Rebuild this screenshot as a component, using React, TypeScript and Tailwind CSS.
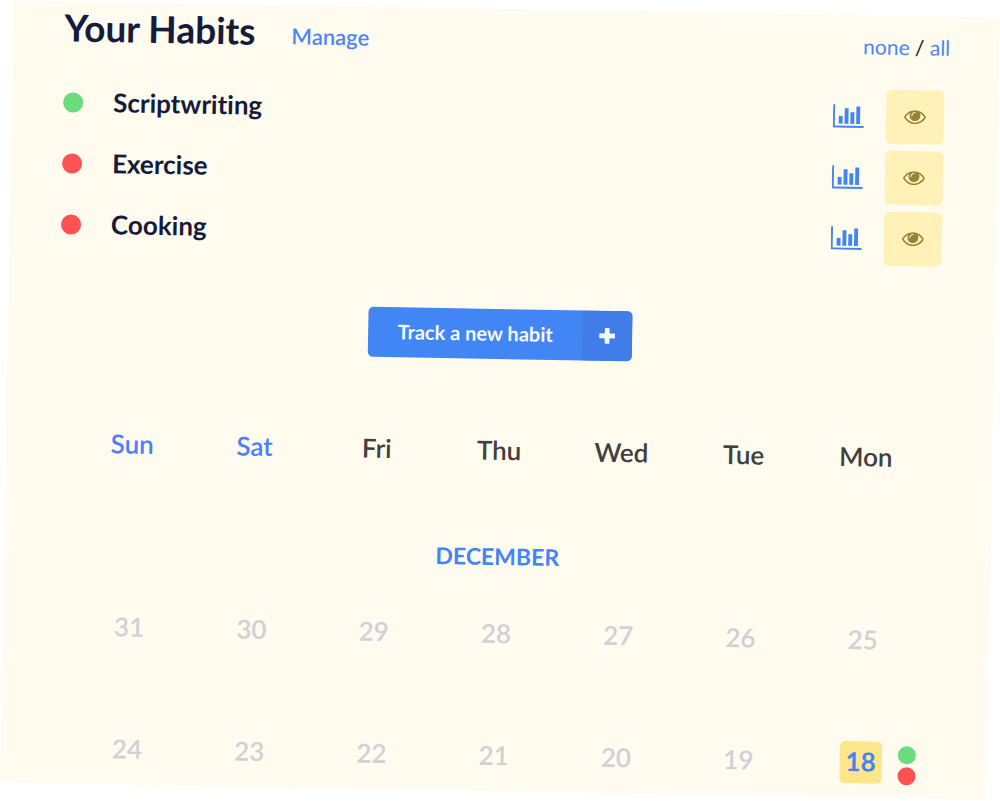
import React from "react";

const habits = [
  { name: "Scriptwriting", dot: "bg-[#69dc7c]" },
  { name: "Exercise", dot: "bg-[#ff5252]" },
  { name: "Cooking", dot: "bg-[#ff5252]" },
];

const weekdays = ["Sun", "Sat", "Fri", "Thu", "Wed", "Tue", "Mon"];
const weeks = [
  [31, 30, 29, 28, 27, 26, 25],
  [24, 23, 22, 21, 20, 19, 18],
];
const today = 18;

function ChartIcon() {
  return (
    <svg viewBox="0 0 2048 1536" className="h-6 w-[31px] fill-current" aria-hidden="true">
      <path d="M640 768v512h-256v-512h256zm384-512v1024h-256v-1024h256zm1024 1152v128h-2048v-1536h128v1408h1920zm-640-896v768h-256v-768h256zm384-384v1152h-256v-1152h256z" />
    </svg>
  );
}

function EyeIcon() {
  return (
    <svg viewBox="0 384 1792 1152" className="h-[14px] w-[22px] fill-current" aria-hidden="true">
      <path d="M1664 960q-152-236-381-353 61 104 61 225 0 185-131.5 316.5t-316.5 131.5-316.5-131.5-131.5-316.5q0-121 61-225-229 117-381 353 133 205 333.5 326.5t434.5 121.5 434.5-121.5 333.5-326.5zm-720-384q0-20-14-34t-34-14q-125 0-214.5 89.5t-89.5 214.5q0 20 14 34t34 14 34-14 14-34q0-86 61-147t147-61q20 0 34-14t14-34zm848 384q0 34-20 69-140 230-376.5 368.5t-499.5 138.5-499.5-139-376.5-368q-20-35-20-69t20-69q140-229 376.5-368t499.5-139 499.5 139 376.5 368q20 35 20 69z" />
    </svg>
  );
}

function PlusIcon() {
  return (
    <svg viewBox="0 0 16 16" className="size-4 fill-current" aria-hidden="true">
      <path d="M6.500 0h3q.9 0 .9.9v4.700h4.700q.9 0 .9.9v3q0 .9-.9.9h-4.700v4.700q0 .9-.9.9h-3q-.9 0-.9-.9v-4.700H.9q-.9 0-.9-.9v-3q0-.9.9-.9h4.700V.9q0-.9.9-.9z" />
    </svg>
  );
}

function HabitRow({ name, dot }: { name: string; dot: string }) {
  return (
    <li className="flex h-[54px] items-center">
      <span className={`size-5 rounded-full ${dot}`} />
      <span className="ml-[30px] pb-0.5 text-[26px] leading-8 font-bold text-[#141b3c]">{name}</span>
      <button type="button" aria-label={`${name} statistics`} className="ml-auto text-[#4285f4]">
        <ChartIcon />
      </button>
      <button
        type="button"
        aria-label={`Show ${name}`}
        className="ml-[22px] flex h-full w-[58px] items-center justify-center rounded-[5px] bg-[#fff1b8] text-[#958338]"
      >
        <EyeIcon />
      </button>
    </li>
  );
}

export default function App() {
  return (
    <div className="min-h-screen overflow-hidden bg-white px-[7px] py-[9px] font-['Lato',sans-serif] [font-variant-ligatures:none]">
      <main className="rotate-1 bg-[#fffbee] pb-[14px]">
        <header className="flex items-center pt-[3px] pr-[49px] pb-px pl-[51px]">
          <h1 className="text-[37px] leading-[46px] font-bold text-[#141b3c]">Your Habits</h1>
          <a href="#manage" className="mt-2.5 ml-9 text-[22px] leading-8 font-semibold text-[#4b87f7]">
            Manage
          </a>
          <div className="mt-2.5 ml-auto text-[21px] leading-8 text-[#141b3c]">
            <a href="#none" className="text-[#4b87f7]">none</a>
            {" / "}
            <a href="#all" className="text-[#4b87f7]">all</a>
          </div>
        </header>

        <ul className="mt-6 flex flex-col gap-[7px] pr-[54px] pl-[51px]">
          {habits.map((habit) => (
            <HabitRow key={habit.name} {...habit} />
          ))}
        </ul>

        <div className="mt-[50px] flex justify-center pr-0.5">
          <button
            type="button"
            className="flex h-[50px] items-stretch overflow-hidden rounded-[5px] bg-[#4285f4] text-xl font-bold text-[#f4f8ff]"
          >
            <span className="flex items-center px-[29px] pb-0.5">Track a new habit</span>
            <span className="flex w-[50px] items-center justify-center bg-[#407de8]">
              <PlusIcon />
            </span>
          </button>
        </div>

        <div className="mt-[76px] px-[65px]">
          <table className="w-full table-fixed border-collapse text-center text-[26px] leading-[30px]">
            <thead>
              <tr>
                {weekdays.map((day, i) => (
                  <th
                    key={day}
                    scope="col"
                    className={`p-0 font-semibold ${i < 2 ? "text-[#4b7ffb]" : "text-[#404040]"}`}
                  >
                    {day}
                  </th>
                ))}
              </tr>
            </thead>
            <tbody>
              <tr>
                <th colSpan={7} className="px-0 pt-[76px] pb-[42px] text-[23px] leading-[30px] font-bold text-[#4285f4]">
                  DECEMBER
                </th>
              </tr>
              {weeks.map((week, row) => (
                <tr key={week[0]}>
                  {week.map((date) => (
                    <td key={date} className={`px-0 pt-0 align-top ${row === 0 ? "pb-20" : "pb-0"}`}>
                      {date === today ? (
                        <div className="relative mx-auto w-[42px]">
                          <span className="block rounded-[5px] bg-[#ffe68a] pb-0.5 leading-10 font-bold text-[#4285f4]">
                            {date}
                          </span>
                          <span className="absolute top-1 left-full ml-4 flex flex-col gap-[3px]">
                            <span className="size-[18px] rounded-full bg-[#69dc7c]" />
                            <span className="size-[18px] rounded-full bg-[#ff5252]" />
                          </span>
                        </div>
                      ) : (
                        <span className="block pb-0.5 leading-10 font-semibold text-[#d0d0d6]">{date}</span>
                      )}
                    </td>
                  ))}
                </tr>
              ))}
            </tbody>
          </table>
        </div>
      </main>
    </div>
  );
}
